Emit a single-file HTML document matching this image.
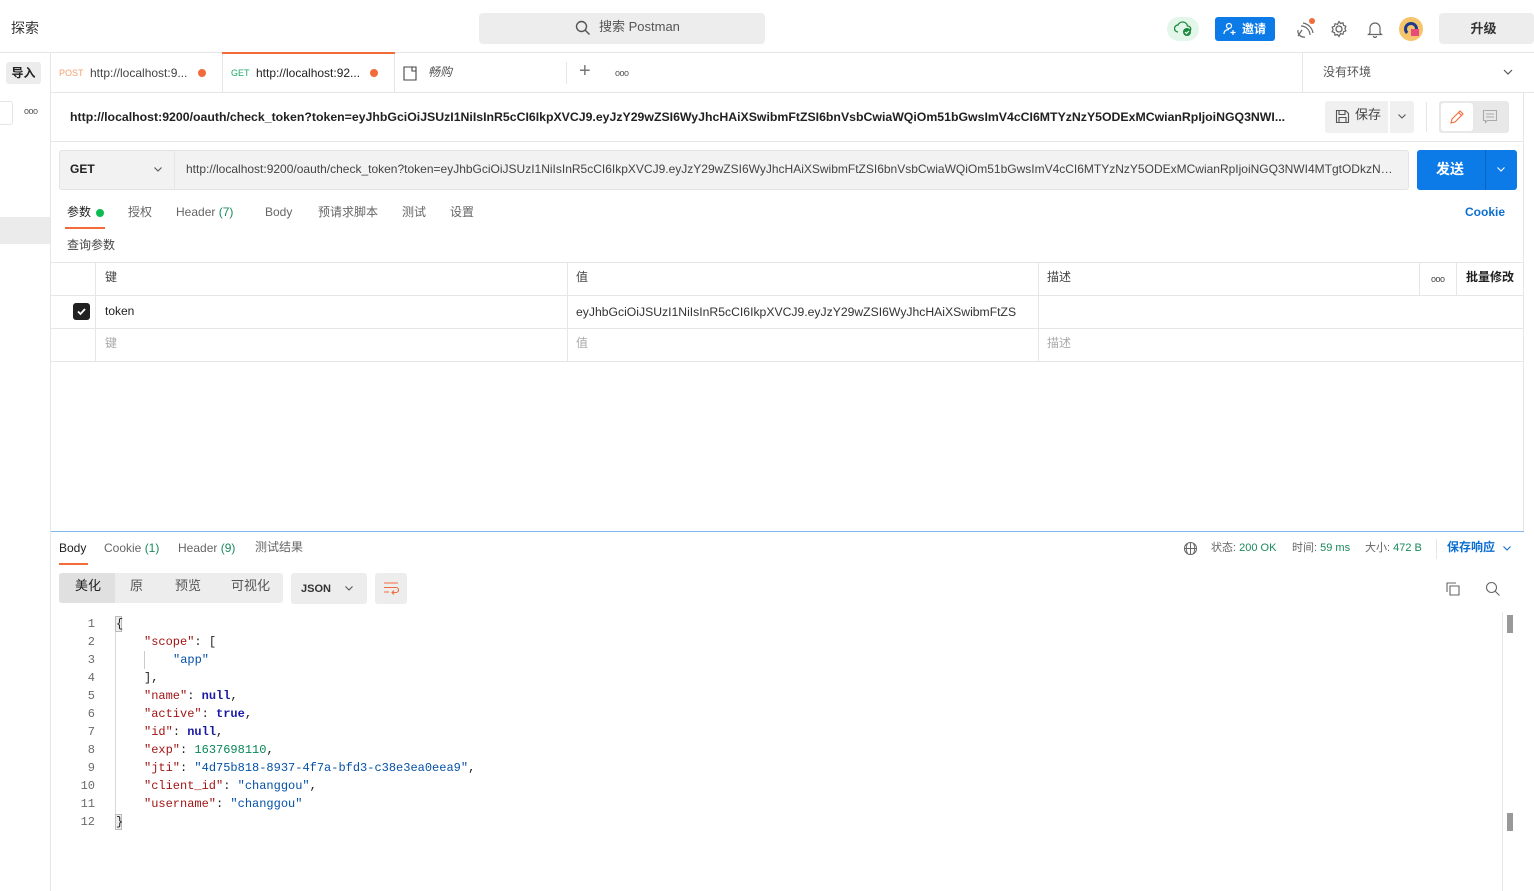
<!DOCTYPE html>
<html><head><meta charset="utf-8"><style>
*{margin:0;padding:0;box-sizing:border-box}
body{width:1534px;height:891px;overflow:hidden;background:#fff;font-family:"Liberation Sans","Noto Sans CJK SC",sans-serif;font-size:12px;line-height:1.15;color:#212121;position:relative}
.a{position:absolute;white-space:nowrap}
.hl{position:absolute;background:#e6e6e6;height:1px}
.vl{position:absolute;background:#e6e6e6;width:1px}
.mono{font-family:"Liberation Mono","Noto Sans CJK SC",monospace;font-size:12px}
.k{color:#a31515}.s{color:#0451a5}.n{color:#098658}.b{color:#1a1aa6;font-weight:bold}
.ln{position:absolute;width:30px;text-align:right;left:65px;color:#6b6b6b}
</style></head><body>
<div class="a" style="left:11px;top:20px;font-size:14px;color:#333">探索</div>
<div class="a" style="left:479px;top:13px;width:286px;height:31px;background:#ededed;border-radius:4px"></div>
<svg class="a" style="left:575px;top:20px" width="16" height="16" viewBox="0 0 16 16"><circle cx="6.5" cy="6.5" r="5" fill="none" stroke="#555" stroke-width="1.4"/><path d="M10 10l4.5 4.5" stroke="#555" stroke-width="1.4"/></svg>
<div class="a" style="left:599px;top:20px;font-size:13px;color:#555">搜索 Postman</div>
<div class="a" style="left:1167px;top:17px;width:32px;height:24px;background:#e4f6ea;border-radius:12px"></div>
<svg class="a" style="left:1174px;top:20px" width="20" height="18" viewBox="0 0 20 18"><path d="M4 12a3.5 3.5 0 010-7 5 5 0 019.5 1A3 3 0 0114 12" fill="none" stroke="#1a8a3c" stroke-width="1.3"/><circle cx="13" cy="12" r="4" fill="#1a8a3c"/><path d="M11 12l1.5 1.5 2.5-2.5" stroke="#fff" fill="none" stroke-width="1.2"/></svg>
<div class="a" style="left:1215px;top:17px;width:60px;height:24px;background:#0c7be8;border-radius:3px;color:#fff;font-weight:bold;font-size:12px;line-height:24px;padding-left:27px">邀请</div>
<svg class="a" style="left:1223px;top:22px" width="14" height="14" viewBox="0 0 14 14"><circle cx="6" cy="4" r="2.5" fill="none" stroke="#fff" stroke-width="1.2"/><path d="M1 12c0-3 2-4.5 5-4.5M10 8v5M7.5 10.5h5" stroke="#fff" fill="none" stroke-width="1.2"/></svg>
<svg class="a" style="left:1294px;top:18px" width="24" height="22" viewBox="0 0 24 22"><path d="M4 18l4-6M4 12a6 6 0 007 7M7 8a9 9 0 019 9M9 5a12 12 0 0110 10" fill="none" stroke="#666" stroke-width="1.2"/><circle cx="18" cy="3" r="3" fill="#f26b3a"/></svg>
<svg class="a" style="left:1330px;top:20px" width="18" height="18" viewBox="0 0 18 18"><circle cx="9" cy="9" r="3" fill="none" stroke="#666" stroke-width="1.3"/><path d="M9 1.5l1.5 2 2.5-.7.5 2.5 2.4 1-1 2.3 1 2.2-2.4 1-.5 2.5-2.5-.7L9 16.5l-1.5-2-2.5.7-.5-2.5-2.4-1 1-2.2-1-2.3 2.4-1 .5-2.5 2.5.7z" fill="none" stroke="#666" stroke-width="1.2"/></svg>
<svg class="a" style="left:1367px;top:20px" width="16" height="18" viewBox="0 0 16 18"><path d="M3 13V8a5 5 0 0110 0v5l1.5 1.5h-13zM6.5 16a1.5 1.5 0 003 0" fill="none" stroke="#666" stroke-width="1.2"/></svg>
<div class="a" style="left:1399px;top:17px;width:24px;height:24px;border-radius:12px;background:#f6c46a"></div>
<div class="a" style="left:1404px;top:22px;width:14px;height:14px;border-radius:7px;border:3px solid #1b3c8c;border-bottom-color:transparent"></div>
<div class="a" style="left:1411px;top:29px;width:8px;height:7px;background:#e84a7a"></div>
<div class="a" style="left:1439px;top:13px;width:95px;height:31px;background:#ededed;border-radius:4px;text-align:center;line-height:31px;font-size:13px;color:#333;font-weight:bold;padding-right:6px">升级</div>
<div class="hl" style="left:0;top:52px;width:1534px"></div>
<div class="vl" style="left:50px;top:52px;height:839px"></div>
<div class="a" style="left:6px;top:62px;width:35px;height:22px;background:#ececec;border-radius:3px;text-align:center;line-height:22px;font-weight:bold">导入</div>
<div class="a" style="left:0;top:101px;width:13px;height:24px;border:1px solid #e6e6e6;border-left:none;border-radius:0 3px 3px 0"></div>
<div class="a" style="left:24px;top:106px;font-size:9px;color:#555;letter-spacing:-0.5px">ooo</div>
<div class="a" style="left:0;top:217px;width:50px;height:27px;background:#ebebeb"></div>
<div class="vl" style="left:222px;top:53px;height:40px"></div>
<div class="vl" style="left:394px;top:53px;height:40px"></div>
<div class="a" style="left:222px;top:52px;width:173px;height:2px;background:#f26b3a"></div>
<div class="a" style="left:59px;top:68px;font-size:9px;color:#f5a06c">POST</div>
<div class="a" style="left:90px;top:67px;color:#444">http://localhost:9...</div>
<div class="a" style="left:198px;top:69px;width:8px;height:8px;border-radius:4px;background:#f26b3a"></div>
<div class="a" style="left:231px;top:68px;font-size:9px;color:#1fa86b">GET</div>
<div class="a" style="left:256px;top:67px;color:#222">http://localhost:92...</div>
<div class="a" style="left:370px;top:69px;width:8px;height:8px;border-radius:4px;background:#f26b3a"></div>
<svg class="a" style="left:403px;top:66px" width="14" height="15" viewBox="0 0 14 15"><path d="M1 1h12v13H1zM9 1v4h4" fill="none" stroke="#444" stroke-width="1.1"/></svg>
<div class="a" style="left:428px;top:66px;color:#555;font-style:italic">畅购</div>
<div class="vl" style="left:566px;top:62px;height:22px"></div>
<div class="a" style="left:579px;top:60px;font-size:20px;color:#777;font-weight:lighter">+</div>
<div class="a" style="left:615px;top:68px;font-size:9px;color:#555;letter-spacing:-0.5px">ooo</div>
<div class="vl" style="left:1302px;top:53px;height:40px"></div>
<div class="a" style="left:1323px;top:66px;color:#555">没有环境</div>
<svg class="a" style="left:1502px;top:68px" width="12" height="8" viewBox="0 0 12 8"><path d="M2 2l4 4 4-4" fill="none" stroke="#555" stroke-width="1.2"/></svg>
<div class="hl" style="left:50px;top:92px;width:1484px"></div>
<div class="a" style="left:70px;top:110px;font-size:12.3px;font-weight:bold;color:#212121">http://localhost:9200/oauth/check_token?token=eyJhbGciOiJSUzI1NiIsInR5cCI6IkpXVCJ9.eyJzY29wZSI6WyJhcHAiXSwibmFtZSI6bnVsbCwiaWQiOm51bGwsImV4cCI6MTYzNzY5ODExMCwianRpIjoiNGQ3NWI...</div>
<div class="a" style="left:1325px;top:101px;width:63px;height:32px;background:#f0f0f0;border-radius:3px 0 0 3px"></div>
<svg class="a" style="left:1335px;top:109px" width="15" height="15" viewBox="0 0 15 15"><path d="M1.5 1.5h9l3 3v9h-12zM4 1.5v4h6v-4M4 13.5v-5h7v5" fill="none" stroke="#555" stroke-width="1.1"/></svg>
<div class="a" style="left:1355px;top:108px;font-size:13px;color:#444">保存</div>
<div class="a" style="left:1390px;top:101px;width:24px;height:32px;background:#f0f0f0;border-radius:0 3px 3px 0"></div>
<svg class="a" style="left:1397px;top:113px" width="10" height="7" viewBox="0 0 10 7"><path d="M1.5 1.5l3.5 3.5 3.5-3.5" fill="none" stroke="#555" stroke-width="1.1"/></svg>
<div class="vl" style="left:1426px;top:102px;height:30px"></div>
<div class="a" style="left:1439px;top:101px;width:70px;height:32px;background:#e8e8e8;border-radius:3px"></div>
<div class="a" style="left:1441px;top:103px;width:32px;height:28px;background:#fff;border-radius:3px"></div>
<svg class="a" style="left:1449px;top:109px" width="16" height="16" viewBox="0 0 16 16"><path d="M2 14l1-4 8-8 3 3-8 8zM9.5 3.5l3 3" fill="none" stroke="#f26b3a" stroke-width="1.1"/></svg>
<svg class="a" style="left:1482px;top:109px" width="16" height="16" viewBox="0 0 16 16"><path d="M1.5 1.5h13v10h-9l-2 2v-2h-2zM4 5h8M4 8h8" fill="none" stroke="#aaa" stroke-width="1.1"/></svg>
<div class="hl" style="left:50px;top:141px;width:1474px"></div>
<div class="vl" style="left:1523px;top:93px;height:439px"></div>
<div class="a" style="left:59px;top:150px;width:1350px;height:40px;background:#f2f2f2;border:1px solid #e3e3e3;border-radius:3px"></div>
<div class="vl" style="left:174px;top:151px;height:38px"></div>
<div class="a" style="left:70px;top:163px;font-weight:bold;color:#212121">GET</div>
<svg class="a" style="left:153px;top:166px" width="10" height="7" viewBox="0 0 10 7"><path d="M1.5 1.5l3.5 3.5 3.5-3.5" fill="none" stroke="#555" stroke-width="1.1"/></svg>
<div class="a" style="left:186px;top:163px;color:#444;width:1212px;overflow:hidden;text-overflow:ellipsis">http://localhost:9200/oauth/check_token?token=eyJhbGciOiJSUzI1NiIsInR5cCI6IkpXVCJ9.eyJzY29wZSI6WyJhcHAiXSwibmFtZSI6bnVsbCwiaWQiOm51bGwsImV4cCI6MTYzNzY5ODExMCwianRpIjoiNGQ3NWI4MTgtODkzNy00ZjdhLWJmZDMtYzM4ZTNlYTBlZWE5IiwiY2xpZW50X2lkIjoiY2hhbmdnb3UiLCJ1c2VybmFtZSI6ImNoYW5nZ291In0</div>
<div class="a" style="left:1417px;top:150px;width:100px;height:40px;background:#0c7be8;border-radius:3px"></div>
<div class="a" style="left:1485px;top:150px;width:1px;height:40px;background:#0a65c0"></div>
<div class="a" style="left:1436px;top:161px;color:#fff;font-weight:bold;font-size:14px">发送</div>
<svg class="a" style="left:1496px;top:166px" width="10" height="7" viewBox="0 0 10 7"><path d="M1.5 1.5l3.5 3.5 3.5-3.5" fill="none" stroke="#fff" stroke-width="1.1"/></svg>
<div class="a" style="left:67px;top:206px;color:#212121">参数</div>
<div class="a" style="left:96px;top:209px;width:8px;height:8px;border-radius:4px;background:#0cbb52"></div>
<div class="a" style="left:65px;top:227px;width:40px;height:2px;background:#f26b3a"></div>
<div class="a" style="left:128px;top:206px;color:#666">授权</div>
<div class="a" style="left:176px;top:206px;color:#666">Header <span style="color:#1a8a5c">(7)</span></div>
<div class="a" style="left:265px;top:206px;color:#666">Body</div>
<div class="a" style="left:318px;top:206px;color:#666">预请求脚本</div>
<div class="a" style="left:402px;top:206px;color:#666">测试</div>
<div class="a" style="left:450px;top:206px;color:#666">设置</div>
<div class="a" style="left:1465px;top:206px;color:#0c6fd0;font-weight:bold">Cookie</div>
<div class="a" style="left:67px;top:239px;color:#444">查询参数</div>
<div class="hl" style="left:51px;top:262px;width:1473px"></div>
<div class="hl" style="left:51px;top:295px;width:1473px"></div>
<div class="hl" style="left:51px;top:328px;width:1473px"></div>
<div class="hl" style="left:51px;top:361px;width:1473px"></div>
<div class="vl" style="left:95px;top:262px;height:99px"></div>
<div class="vl" style="left:567px;top:262px;height:99px"></div>
<div class="vl" style="left:1038px;top:262px;height:99px"></div>
<div class="vl" style="left:1419px;top:262px;height:33px"></div>
<div class="vl" style="left:1456px;top:262px;height:33px"></div>
<div class="a" style="left:105px;top:271px;color:#444">键</div>
<div class="a" style="left:576px;top:271px;color:#444">值</div>
<div class="a" style="left:1047px;top:271px;color:#444">描述</div>
<div class="a" style="left:1431px;top:274px;font-size:9px;color:#444;letter-spacing:-0.5px">ooo</div>
<div class="a" style="left:1466px;top:271px;color:#212121;font-weight:bold">批量修改</div>
<div class="a" style="left:73px;top:303px;width:17px;height:17px;background:#212121;border-radius:3px"></div>
<svg class="a" style="left:75px;top:305px" width="13" height="13" viewBox="0 0 13 13"><path d="M3 6.5l2.5 2.5 4.5-5" fill="none" stroke="#fff" stroke-width="1.8"/></svg>
<div class="a" style="left:105px;top:305px;color:#212121">token</div>
<div class="a" style="left:576px;top:305px;color:#333;font-size:12.2px">eyJhbGciOiJSUzI1NiIsInR5cCI6IkpXVCJ9.eyJzY29wZSI6WyJhcHAiXSwibmFtZS</div>
<div class="a" style="left:105px;top:337px;color:#aaa">键</div>
<div class="a" style="left:576px;top:337px;color:#aaa">值</div>
<div class="a" style="left:1047px;top:337px;color:#aaa">描述</div>
<div class="a" style="left:51px;top:531px;width:1473px;height:1px;background:#7cb8ef"></div>
<div class="a" style="left:59px;top:542px;color:#212121">Body</div>
<div class="a" style="left:59px;top:563px;width:29px;height:2px;background:#f26b3a"></div>
<div class="a" style="left:104px;top:542px;color:#666">Cookie <span style="color:#1a8a5c">(1)</span></div>
<div class="a" style="left:178px;top:542px;color:#666">Header <span style="color:#1a8a5c">(9)</span></div>
<div class="a" style="left:255px;top:541px;color:#666">测试结果</div>
<svg class="a" style="left:1183px;top:541px" width="15" height="15" viewBox="0 0 15 15"><circle cx="7.5" cy="7.5" r="6" fill="none" stroke="#666" stroke-width="1.1"/><path d="M1.5 7.5h12M7.5 1.5v12M4.5 2.5c-1.5 3-1.5 7 0 10M10.5 2.5c1.5 3 1.5 7 0 10" fill="none" stroke="#666" stroke-width="1"/></svg>
<div class="a" style="left:1211px;top:542px;font-size:11px;color:#666">状态: <span style="color:#1a8a5c">200 OK</span></div>
<div class="a" style="left:1292px;top:542px;font-size:11px;color:#666">时间: <span style="color:#1a8a5c">59 ms</span></div>
<div class="a" style="left:1365px;top:542px;font-size:11px;color:#666">大小: <span style="color:#1a8a5c">472 B</span></div>
<div class="vl" style="left:1436px;top:539px;height:20px"></div>
<div class="a" style="left:1447px;top:541px;color:#0c6fd0;font-weight:bold">保存响应</div>
<svg class="a" style="left:1502px;top:545px" width="10" height="7" viewBox="0 0 10 7"><path d="M1.5 1.5l3.5 3.5 3.5-3.5" fill="none" stroke="#0c6fd0" stroke-width="1.1"/></svg>
<div class="a" style="left:59px;top:573px;width:224px;height:30px;background:#ededed;border-radius:3px"></div>
<div class="a" style="left:59px;top:573px;width:56px;height:30px;background:#e0e0e0;border-radius:3px 0 0 3px"></div>
<div class="a" style="left:75px;top:579px;font-size:13px;color:#212121">美化</div>
<div class="a" style="left:130px;top:579px;font-size:13px;color:#555">原</div>
<div class="a" style="left:175px;top:579px;font-size:13px;color:#555">预览</div>
<div class="a" style="left:231px;top:579px;font-size:13px;color:#555">可视化</div>
<div class="a" style="left:291px;top:573px;width:76px;height:31px;background:#ededed;border-radius:3px"></div>
<div class="a" style="left:301px;top:583px;font-size:11px;color:#333;font-weight:bold">JSON</div>
<svg class="a" style="left:344px;top:585px" width="10" height="7" viewBox="0 0 10 7"><path d="M1.5 1.5l3.5 3.5 3.5-3.5" fill="none" stroke="#555" stroke-width="1.1"/></svg>
<div class="a" style="left:375px;top:573px;width:32px;height:31px;background:#ededed;border-radius:3px"></div>
<svg class="a" style="left:383px;top:581px" width="16" height="14" viewBox="0 0 16 14"><path d="M1 2h14M1 6.5h12a2.5 2.5 0 010 5H9M11 9.5l-2 2 2 2M1 11h5" fill="none" stroke="#f26b3a" stroke-width="1.1"/></svg>
<svg class="a" style="left:1445px;top:581px" width="16" height="16" viewBox="0 0 16 16"><path d="M5 5h9v9H5zM2 11V2h9" fill="none" stroke="#666" stroke-width="1.1"/></svg>
<svg class="a" style="left:1485px;top:581px" width="16" height="16" viewBox="0 0 16 16"><circle cx="6.5" cy="6.5" r="5" fill="none" stroke="#666" stroke-width="1.1"/><path d="M10 10l4.5 4.5" stroke="#666" stroke-width="1.1"/></svg>
<div class="vl" style="left:1502px;top:612px;height:279px"></div>
<div class="a" style="left:1507px;top:615px;width:6px;height:18px;background:#999"></div>
<div class="a" style="left:1507px;top:813px;width:6px;height:18px;background:#999"></div>
<div class="vl" style="left:115px;top:616px;height:212px;background:#d8d8d8"></div>
<div class="a" style="left:115px;top:616px;width:7px;height:16px;border:1px solid #bbb;background:#eee"></div>
<div class="a" style="left:115px;top:814px;width:7px;height:16px;border:1px solid #bbb;background:#eee"></div>
<div class="vl" style="left:144px;top:651px;height:18px;background:#ccc"></div>
<div class="mono" style="position:absolute;left:0;top:615px;line-height:18px">
<div class="ln" style="top:0">1</div><div class="ln" style="top:18px">2</div><div class="ln" style="top:36px">3</div><div class="ln" style="top:54px">4</div><div class="ln" style="top:72px">5</div><div class="ln" style="top:90px">6</div><div class="ln" style="top:108px">7</div><div class="ln" style="top:126px">8</div><div class="ln" style="top:144px">9</div><div class="ln" style="top:162px">10</div><div class="ln" style="top:180px">11</div><div class="ln" style="top:198px">12</div>
<div class="a" style="left:116px;top:0">{</div>
<div class="a" style="left:144px;top:18px"><span class="k">"scope"</span>: [</div>
<div class="a" style="left:173px;top:36px"><span class="s">"app"</span></div>
<div class="a" style="left:144px;top:54px">],</div>
<div class="a" style="left:144px;top:72px"><span class="k">"name"</span>: <span class="b">null</span>,</div>
<div class="a" style="left:144px;top:90px"><span class="k">"active"</span>: <span class="b">true</span>,</div>
<div class="a" style="left:144px;top:108px"><span class="k">"id"</span>: <span class="b">null</span>,</div>
<div class="a" style="left:144px;top:126px"><span class="k">"exp"</span>: <span class="n">1637698110</span>,</div>
<div class="a" style="left:144px;top:144px"><span class="k">"jti"</span>: <span class="s">"4d75b818-8937-4f7a-bfd3-c38e3ea0eea9"</span>,</div>
<div class="a" style="left:144px;top:162px"><span class="k">"client_id"</span>: <span class="s">"changgou"</span>,</div>
<div class="a" style="left:144px;top:180px"><span class="k">"username"</span>: <span class="s">"changgou"</span></div>
<div class="a" style="left:116px;top:198px">}</div>
</div>
</body></html>
